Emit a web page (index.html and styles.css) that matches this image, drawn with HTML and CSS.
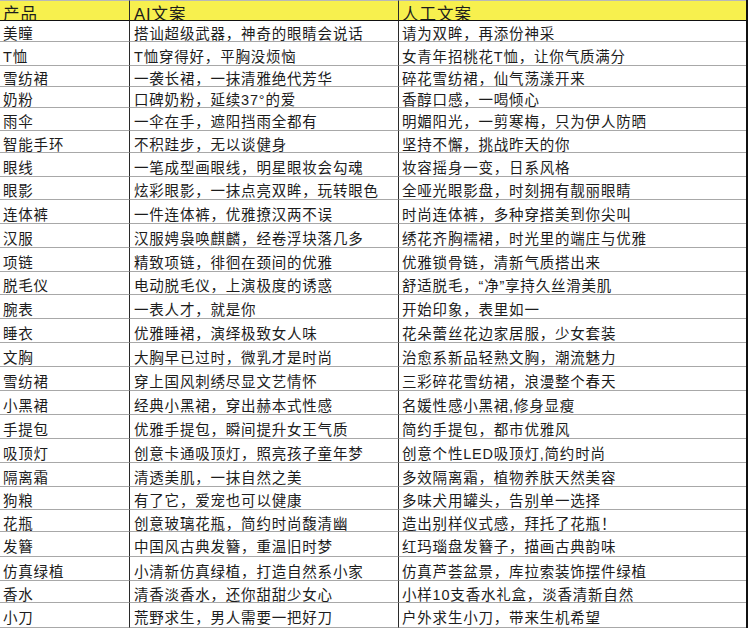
FILE: index.html
```html
<!DOCTYPE html>
<html lang="zh">
<head>
<meta charset="utf-8">
<title>产品文案对比</title>
<link rel="stylesheet" href="styles.css">
</head>
<body>
<div class="sheet">
  <div class="cell head c1">产品</div><div class="cell head c2">AI文案</div><div class="cell head c3">人工文案</div>
  <div class="cell c1">美瞳</div><div class="cell c2">搭讪超级武器，神奇的眼睛会说话</div><div class="cell c3">请为双眸，再添份神采</div>
  <div class="cell c1">T恤</div><div class="cell c2">T恤穿得好，平胸没烦恼</div><div class="cell c3">女青年招桃花T恤，让你气质满分</div>
  <div class="cell c1">雪纺裙</div><div class="cell c2">一袭长裙，一抹清雅绝代芳华</div><div class="cell c3">碎花雪纺裙，仙气荡漾开来</div>
  <div class="cell c1">奶粉</div><div class="cell c2">口碑奶粉，延续37°的爱</div><div class="cell c3">香醇口感，一喝倾心</div>
  <div class="cell c1">雨伞</div><div class="cell c2">一伞在手，遮阳挡雨全都有</div><div class="cell c3">明媚阳光，一剪寒梅，只为伊人防晒</div>
  <div class="cell c1">智能手环</div><div class="cell c2">不积跬步，无以谈健身</div><div class="cell c3">坚持不懈，挑战昨天的你</div>
  <div class="cell c1">眼线</div><div class="cell c2">一笔成型画眼线，明星眼妆会勾魂</div><div class="cell c3">妆容摇身一变，日系风格</div>
  <div class="cell c1">眼影</div><div class="cell c2">炫彩眼影，一抹点亮双眸，玩转眼色</div><div class="cell c3">全哑光眼影盘，时刻拥有靓丽眼睛</div>
  <div class="cell c1">连体裤</div><div class="cell c2">一件连体裤，优雅撩汉两不误</div><div class="cell c3">时尚连体裤，多种穿搭美到你尖叫</div>
  <div class="cell c1">汉服</div><div class="cell c2">汉服娉袅唤麒麟，经卷浮块落几多</div><div class="cell c3">绣花齐胸襦裙，时光里的端庄与优雅</div>
  <div class="cell c1">项链</div><div class="cell c2">精致项链，徘徊在颈间的优雅</div><div class="cell c3">优雅锁骨链，清新气质搭出来</div>
  <div class="cell c1">脱毛仪</div><div class="cell c2">电动脱毛仪，上演极度的诱惑</div><div class="cell c3">舒适脱毛，“净”享持久丝滑美肌</div>
  <div class="cell c1">腕表</div><div class="cell c2">一表人才，就是你</div><div class="cell c3">开始印象，表里如一</div>
  <div class="cell c1">睡衣</div><div class="cell c2">优雅睡裙，演绎极致女人味</div><div class="cell c3">花朵蕾丝花边家居服，少女套装</div>
  <div class="cell c1">文胸</div><div class="cell c2">大胸早已过时，微乳才是时尚</div><div class="cell c3">治愈系新品轻熟文胸，潮流魅力</div>
  <div class="cell c1">雪纺裙</div><div class="cell c2">穿上国风刺绣尽显文艺情怀</div><div class="cell c3">三彩碎花雪纺裙，浪漫整个春天</div>
  <div class="cell c1">小黑裙</div><div class="cell c2">经典小黑裙，穿出赫本式性感</div><div class="cell c3">名媛性感小黑裙,修身显瘦</div>
  <div class="cell c1">手提包</div><div class="cell c2">优雅手提包，瞬间提升女王气质</div><div class="cell c3">简约手提包，都市优雅风</div>
  <div class="cell c1">吸顶灯</div><div class="cell c2">创意卡通吸顶灯，照亮孩子童年梦</div><div class="cell c3">创意个性LED吸顶灯,简约时尚</div>
  <div class="cell c1">隔离霜</div><div class="cell c2">清透美肌，一抹自然之美</div><div class="cell c3">多效隔离霜，植物养肤天然美容</div>
  <div class="cell c1">狗粮</div><div class="cell c2">有了它，爱宠也可以健康</div><div class="cell c3">多味犬用罐头，告别单一选择</div>
  <div class="cell c1">花瓶</div><div class="cell c2">创意玻璃花瓶，简约时尚馥清幽</div><div class="cell c3">造出别样仪式感，拜托了花瓶！</div>
  <div class="cell c1">发簪</div><div class="cell c2">中国风古典发簪，重温旧时梦</div><div class="cell c3">红玛瑙盘发簪子，描画古典韵味</div>
  <div class="cell c1">仿真绿植</div><div class="cell c2">小清新仿真绿植，打造自然系小家</div><div class="cell c3">仿真芦荟盆景，库拉索装饰摆件绿植</div>
  <div class="cell c1">香水</div><div class="cell c2">清香淡香水，还你甜甜少女心</div><div class="cell c3">小样10支香水礼盒，淡香清新自然</div>
  <div class="cell c1">小刀</div><div class="cell c2">荒野求生，男人需要一把好刀</div><div class="cell c3">户外求生小刀，带来生机希望</div>
</div>
</body>
</html>
```

FILE: styles.css
```css
html, body {
  margin: 0;
  padding: 0;
  background: #ffffff;
}

.sheet {
  width: 748px;
  height: 628px;
  box-sizing: border-box;
  border-right: 2px solid #111;
  overflow: hidden;
  display: grid;
  grid-template-columns: 130px 269px 1fr;
  grid-template-rows: 21px 21px 24px 21px 21px 23px 22px 24px 23px 24px 24px 24px 23px 24px 24px 24px 24px 24px 24px 24px 24px 23px 22px 25px 24px 22px 25px;
  font-family: "Liberation Sans", "Noto Sans CJK SC", sans-serif;
  color: #1c1c1c;
}

.cell {
  box-sizing: border-box;
  border-bottom: 1px solid #a8a8a8;
  display: flex;
  align-items: center;
  padding-top: 3px;
  font-size: 14.5px;
  letter-spacing: 0.8px;
  white-space: nowrap;
  overflow: hidden;
}

.c1 {
  padding-left: 3px;
  border-right: 1px solid #2a2a2a;
}

.c2 {
  padding-left: 4px;
  border-right: 1px solid #2a2a2a;
}

.c3 {
  padding-left: 3px;
}

.head {
  background: #f7f04e;
  border-top: 1px solid #b8b8b8;
  border-bottom: 1px solid #111;
  font-size: 16.5px;
  letter-spacing: 1px;
  padding-top: 4px;
}
```
